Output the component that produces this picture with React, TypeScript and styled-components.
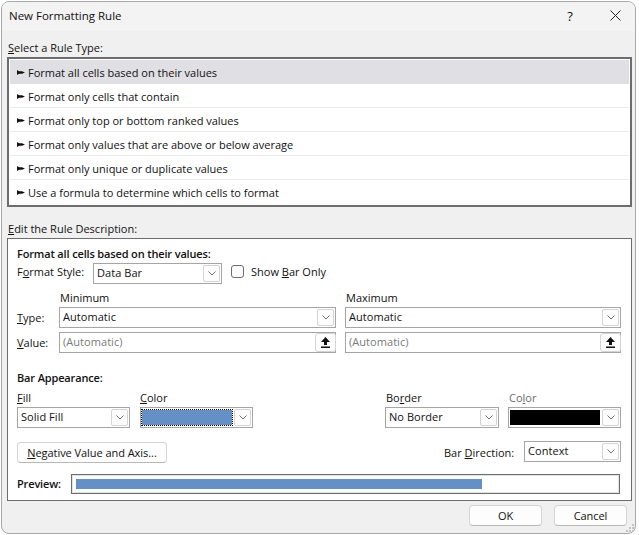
import React from "react";
import styled, { createGlobalStyle } from "styled-components";

const GlobalStyle = createGlobalStyle`
  html, body { margin: 0; padding: 0; background: #fff; }
  body { font-family: "Open Sans", "Noto Sans", sans-serif; font-size: 11px; color: #111; }
`;

const Window = styled.div`
  box-sizing: border-box;
  width: 635px;
  height: 533px;
  margin: 1px 0 0 1px;
  border: 1px solid #a8a8a8;
  border-radius: 8px;
  background: #f0f0f0;
  overflow: hidden;
  position: relative;
`;

const TitleBar = styled.div`
  box-sizing: border-box;
  height: 29px;
  background: #f3f3f3;
  display: flex;
  align-items: center;
  gap: 5px;
  padding: 0 0 2px 7px;
  font-size: 11.5px;
`;

const TitleText = styled.span`
  flex: 1;
`;

const TitleButton = styled.span`
  width: 40px;
  display: flex;
  justify-content: center;
  font-size: 13px;
`;

const Content = styled.div`
  padding: 9px 0 0 5px;
`;

const GroupLabel = styled.div<{ $top?: number }>`
  height: 16px;
  line-height: 15px;
  padding-left: 1px;
  margin-top: ${(p) => p.$top ?? 0}px;
`;

const RuleList = styled.div`
  box-sizing: border-box;
  width: 625px;
  height: 150px;
  margin-top: 1px;
  border: 2px solid #6d6d6d;
  background: #fff;
  padding: 1px 1px 0;
`;

const RuleRow = styled.div<{ $selected?: boolean }>`
  box-sizing: border-box;
  height: 24px;
  display: flex;
  align-items: center;
  gap: 3px;
  padding: 1px 0 0 7px;
  background: ${(p) => (p.$selected ? "#e0dfe3" : "#fff")};
  border-bottom: 1px solid ${(p) => (p.$selected ? "#e0dfe3" : "#ececec")};
  &:last-child { border-bottom-color: transparent; }
`;

const DescBox = styled.div`
  box-sizing: border-box;
  width: 625px;
  height: 263px;
  margin-top: 1px;
  border: 1px solid #6d6d6d;
  background: #fff;
  padding: 7px 0 0 9px;
  position: relative;
`;

const Heading = styled.div<{ $top?: number; $width?: number }>`
  font-weight: 600;
  height: 16px;
  line-height: 16px;
  letter-spacing: -0.15px;
  flex-shrink: 0;
  margin-top: ${(p) => p.$top ?? 0}px;
  width: ${(p) => (p.$width ? `${p.$width}px` : "auto")};
`;

const Row = styled.div<{ $top?: number }>`
  display: flex;
  align-items: center;
  margin-top: ${(p) => p.$top ?? 0}px;
`;

const Label = styled.span<{ $width?: number; $left?: number; $muted?: boolean; $lift?: number }>`
  display: inline-block;
  width: ${(p) => (p.$width ? `${p.$width}px` : "auto")};
  margin-left: ${(p) => p.$left ?? 0}px;
  margin-bottom: ${(p) => p.$lift ?? 0}px;
  flex-shrink: 0;
  color: ${(p) => (p.$muted ? "#6d6d6d" : "#111")};
  line-height: 14px;
`;

const Spacer = styled.span<{ $width: number }>`
  width: ${(p) => p.$width}px;
  flex-shrink: 0;
`;

const Field = styled.div<{ $width: number; $height?: number; $lift?: number }>`
  box-sizing: border-box;
  width: ${(p) => p.$width}px;
  height: ${(p) => p.$height ?? 21}px;
  margin-top: ${(p) => -(p.$lift ?? 0)}px;
  flex-shrink: 0;
  border: 1px solid #a5a5a5;
  background: #fff;
  display: flex;
  align-items: center;
  padding: 0 1px 2px 3px;
  letter-spacing: 0.05px;
`;

const FieldText = styled.span<{ $muted?: boolean }>`
  flex: 1;
  color: ${(p) => (p.$muted ? "#7a7a7a" : "#111")};
`;

const DropButton = styled.span`
  box-sizing: border-box;
  width: 17px;
  height: 17px;
  margin: 2px 0 0;
  border: 1px solid #d4d4d4;
  border-radius: 2px;
  display: flex;
  align-items: center;
  justify-content: center;
  background: #fdfdfd;
`;

const RefButton = styled.span`
  box-sizing: border-box;
  width: 21px;
  height: 19px;
  margin: 1px -2px 0 0;
  border: 1px solid #d4d4d4;
  border-radius: 3px;
  display: flex;
  align-items: center;
  justify-content: center;
  background: #fdfdfd;
`;

const Swatch = styled.span<{ $color: string; $focus?: boolean }>`
  flex: 1;
  height: 15px;
  margin: 2px 2px 0 -2px;
  background: ${(p) => p.$color};
  outline: ${(p) => (p.$focus ? "1px dotted #000" : "none")};
`;

const Check = styled.span`
  box-sizing: border-box;
  width: 13px;
  height: 13px;
  margin: 0 0 4px 9px;
  border: 1px solid #6d6d6d;
  border-radius: 3px;
  background: #fbfbfb;
`;

const Button = styled.button<{ $width: number }>`
  box-sizing: border-box;
  width: ${(p) => p.$width}px;
  height: 21px;
  flex-shrink: 0;
  border: 1px solid #d4d4d4;
  border-bottom-color: #b8b8b8;
  border-radius: 4px;
  background: #fdfdfd;
  font: inherit;
  color: #111;
  letter-spacing: -0.05px;
  padding: 0 0 1px;
`;

const PreviewBox = styled.div`
  box-sizing: border-box;
  width: 549px;
  height: 20px;
  border: 1px solid #6d6d6d;
  padding: 4px;
  box-shadow: inset 0 0 0 1px #e3e3e3;
`;

const PreviewFill = styled.div<{ $pct: number }>`
  width: ${(p) => p.$pct}%;
  height: 100%;
  background: #6490c6;
`;

const Footer = styled.div`
  display: flex;
  justify-content: flex-end;
  gap: 12px;
  padding: 4px 8px 0 0;
`;

const Grip = styled.svg`
  position: absolute;
  right: 0;
  bottom: 0;
`;

const Pointer = () => (
  <svg width="8" height="5" viewBox="0 0 8 5">
    <path d="M0 0 L2 1.2 H5 L8 2.5 L5 3.8 H2 L0 5Z" fill="#111" />
  </svg>
);

const Chevron = () => (
  <svg width="8" height="5" viewBox="0 0 8 5">
    <path d="M0.5 0.5 L4 4 L7.5 0.5" fill="none" stroke="#707070" />
  </svg>
);

const UpArrow = () => (
  <svg width="11" height="11" viewBox="0 0 11 11">
    <path d="M5.5 0 L10 5 L7 5 L7 8 L4 8 L4 5 L1 5Z M1 9.5 H10 V11 H1Z" fill="#111" />
  </svg>
);

const rules = [
  "Format all cells based on their values",
  "Format only cells that contain",
  "Format only top or bottom ranked values",
  "Format only values that are above or below average",
  "Format only unique or duplicate values",
  "Use a formula to determine which cells to format",
];

const Select = ({ width, text, lift }: { width: number; text: string; lift?: number }) => (
  <Field $width={width} $lift={lift}>
    <FieldText>{text}</FieldText>
    <DropButton><Chevron /></DropButton>
  </Field>
);

const RefInput = ({ width }: { width: number }) => (
  <Field $width={width}>
    <FieldText $muted>(Automatic)</FieldText>
    <RefButton><UpArrow /></RefButton>
  </Field>
);

export default function App() {
  return (
    <>
      <GlobalStyle />
      <Window>
        <TitleBar>
          <TitleText>New Formatting Rule</TitleText>
          <TitleButton>?</TitleButton>
          <TitleButton>
            <svg width="11" height="11" viewBox="0 0 11 11">
              <path d="M0.5 0.5 L10.5 10.5 M10.5 0.5 L0.5 10.5" stroke="#222" fill="none" />
            </svg>
          </TitleButton>
        </TitleBar>
        <Content>
          <GroupLabel><u>S</u>elect a Rule Type:</GroupLabel>
          <RuleList>
            {rules.map((r, i) => (
              <RuleRow key={r} $selected={i === 0}>
                <Pointer />
                {r}
              </RuleRow>
            ))}
          </RuleList>
          <GroupLabel $top={14}><u>E</u>dit the Rule Description:</GroupLabel>
          <DescBox>
            <Heading>Format all cells based on their values:</Heading>
            <Row $top={1}>
              <Label $width={76} $lift={4}>F<u>o</u>rmat Style:</Label>
              <Select width={129} text="Data Bar" />
              <Check />
              <Label $left={7} $lift={3}>Show <u>B</u>ar Only</Label>
            </Row>
            <Row $top={7}>
              <Label $left={43} $width={286}>Minimum</Label>
              <Label>Maximum</Label>
            </Row>
            <Row $top={2}>
              <Label $width={42}><u>T</u>ype:</Label>
              <Select width={277} text="Automatic" />
              <Spacer $width={9} />
              <Select width={276} text="Automatic" />
            </Row>
            <Row $top={4}>
              <Label $width={42}><u>V</u>alue:</Label>
              <RefInput width={277} />
              <Spacer $width={9} />
              <RefInput width={276} />
            </Row>
            <Heading $top={17}>Bar Appearance:</Heading>
            <Row $top={5}>
              <Label $width={123}><u>F</u>ill</Label>
              <Label $width={246}><u>C</u>olor</Label>
              <Label $width={123}>Bo<u>r</u>der</Label>
              <Label $muted>Co<u>l</u>or</Label>
            </Row>
            <Row $top={2}>
              <Select width={113} text="Solid Fill" />
              <Spacer $width={10} />
              <Field $width={113}>
                <Swatch $color="#6490c6" $focus />
                <DropButton><Chevron /></DropButton>
              </Field>
              <Spacer $width={132} />
              <Select width={114} text="No Border" />
              <Spacer $width={9} />
              <Field $width={113}>
                <Swatch $color="#000" />
                <DropButton><Chevron /></DropButton>
              </Field>
            </Row>
            <Row $top={14}>
              <Button $width={150}><u>N</u>egative Value and Axis...</Button>
              <Label $left={277} $width={80}>Bar <u>D</u>irection:</Label>
              <Select width={97} text="Context" lift={2} />
            </Row>
            <Row $top={11}>
              <Heading $width={54}>Preview:</Heading>
              <PreviewBox><PreviewFill $pct={75.3} /></PreviewBox>
            </Row>
          </DescBox>
          <Footer>
            <Button $width={73}>OK</Button>
            <Button $width={73}>Cancel</Button>
          </Footer>
        </Content>
        <Grip width="10" height="10" viewBox="0 0 10 10">
          <path d="M7 1h2v2H7z M4 4h2v2H4z M7 4h2v2H7z M1 7h2v2H1z M4 7h2v2H4z M7 7h2v2H7z" fill="#c4c4c4" />
        </Grip>
      </Window>
    </>
  );
}
